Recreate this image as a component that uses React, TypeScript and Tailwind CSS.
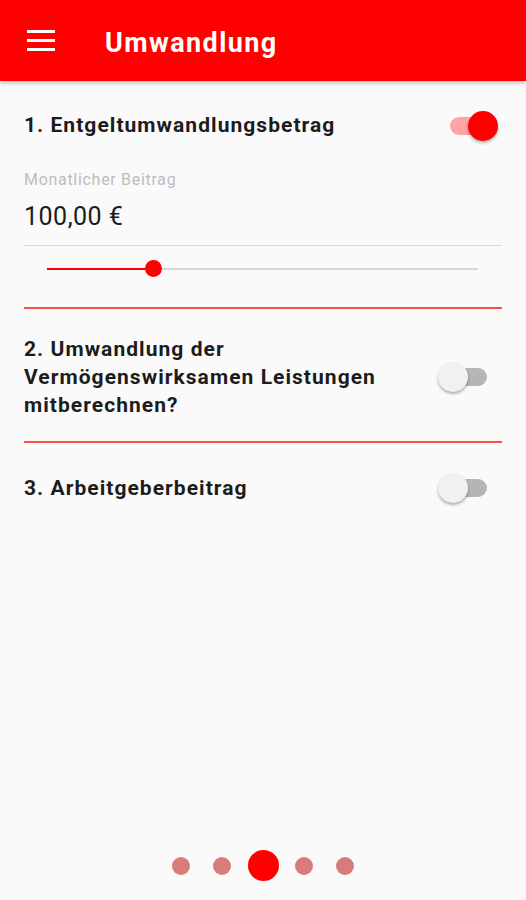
import React from 'react';

const font = { fontFamily: 'Roboto, "Noto Sans", Arial, sans-serif' };

function OnSwitch() {
  return (
    <div className="relative w-[48px] h-[30px] mr-[4px] shrink-0">
      <div className="absolute left-0 top-[6px] w-[44px] h-[18px] rounded-full bg-[#ffa3a3]" />
      <div className="absolute right-0 top-0 w-[30px] h-[30px] rounded-full bg-[#ff0000] shadow-[0_2px_3px_rgba(0,0,0,0.3)]" />
    </div>
  );
}

function OffSwitch() {
  return (
    <div className="relative w-[49px] h-[30px] mr-[15px] shrink-0">
      <div className="absolute left-[8px] top-[6px] w-[41px] h-[18px] rounded-full bg-[#b5b5b5]" />
      <div className="absolute left-0 top-0 w-[30px] h-[30px] rounded-full bg-[#f1f1f1] shadow-[0_2px_3px_rgba(0,0,0,0.3)]" />
    </div>
  );
}

export default function App() {
  const dots = [false, false, true, false, false];

  return (
    <div className="h-[900px] flex flex-col bg-[#fafafa] overflow-hidden" style={font}>
      {/* Toolbar */}
      <header className="h-[81px] shrink-0 bg-[#ff0000] flex items-center shadow-[0_2px_4px_rgba(0,0,0,0.25)] relative z-10">
        <div className="w-[28px] ml-[27px] flex flex-col gap-[6px]">
          <span className="h-[3px] bg-white" />
          <span className="h-[3px] bg-white" />
          <span className="h-[3px] bg-white" />
        </div>
        <h1 className="ml-[50px] mt-[6px] text-white text-[27px] tracking-[1.4px] font-bold leading-none">Umwandlung</h1>
      </header>

      <main className="px-6">
        {/* 1 */}
        <div className="mt-[30px] flex items-center justify-between h-[30px]">
          <span className="text-[21px] tracking-[1.05px] font-bold text-[#1c1c1c]">1. Entgeltumwandlungsbetrag</span>
          <OnSwitch />
        </div>
        <div className="mt-[29px] text-[16px] tracking-[0.7px] leading-[20px] text-[#bdbdbd]">Monatlicher Beitrag</div>
        <div className="mt-[12px] text-[25px] tracking-[0.5px] leading-[30px] text-[#1c1c1c]">100,00 €</div>
        <div className="mt-[13px] h-px bg-[#dadada]" />

        {/* slider */}
        <div className="mt-[15px] ml-[23px] mr-[24px] relative h-[16px]">
          <div className="absolute left-0 right-0 top-[7px] h-[2px] bg-[#d6d6d6]" />
          <div className="absolute left-0 top-[7px] h-[2px] w-[106px] bg-[#ff0000]" />
          <div className="absolute left-[98px] top-[-1px] w-[17px] h-[17px] rounded-full bg-[#ff0000]" />
        </div>

        <div className="mt-[30px] h-[2px] bg-[#ff4d4d]" />

        {/* 2 */}
        <div className="mt-[26px] flex items-center justify-between">
          <span className="text-[21px] tracking-[1.05px] font-bold leading-[28px] text-[#1c1c1c] max-w-[400px]">
            2. Umwandlung der Vermögenswirksamen Leistungen mitberechnen?
          </span>
          <OffSwitch />
        </div>

        <div className="mt-[22px] h-[2px] bg-[#ff4d4d]" />

        {/* 3 */}
        <div className="mt-[31px] flex items-center justify-between h-[28px]">
          <span className="text-[21px] tracking-[1.05px] font-bold leading-[28px] text-[#1c1c1c]">3. Arbeitgeberbeitrag</span>
          <OffSwitch />
        </div>
      </main>

      {/* pager dots */}
      <div className="mt-auto mb-[19px] h-[31px] flex justify-center">
        {dots.map((active, i) => (
          <div key={i} className="w-[41px] flex items-center justify-center">
            {active ? (
              <span className="w-[31px] h-[31px] rounded-full bg-[#ff0000]" />
            ) : (
              <span className="w-[18px] h-[18px] rounded-full bg-[#d97b7b]" />
            )}
          </div>
        ))}
      </div>
    </div>
  );
}
